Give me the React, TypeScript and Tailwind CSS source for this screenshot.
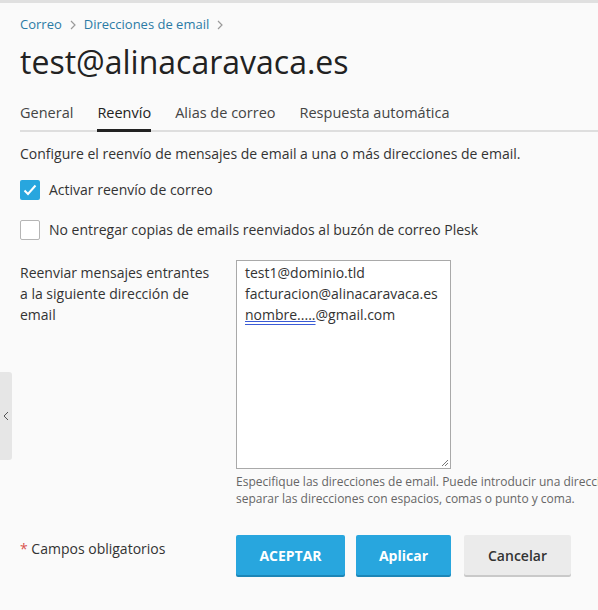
import { useState } from "react";

const tabs = ["General", "Reenvío", "Alias de correo", "Respuesta automática"];

function Chevron() {
  return (
    <svg width="8" height="10" viewBox="0 0 8 10" className="mx-[7px] inline-block">
      <path d="M2 1l4 4-4 4" fill="none" stroke="#9a9a9a" strokeWidth="1.2" />
    </svg>
  );
}

function Checkbox({ checked }: { checked: boolean }) {
  return checked ? (
    <span className="grid h-5 w-5 shrink-0 place-items-center rounded-[2px] bg-[#28a6de]">
      <svg width="14" height="12" viewBox="0 0 14 12">
        <path d="M1.5 6.5l3.5 3.5 7.5-8.5" fill="none" stroke="#fff" strokeWidth="2" />
      </svg>
    </span>
  ) : (
    <span className="h-5 w-5 shrink-0 rounded-[2px] border border-[#b5b5b5] bg-white" />
  );
}

export default function App() {
  const [active] = useState(1);

  return (
    <div
      className="relative h-[610px] w-[598px] overflow-hidden bg-[#fafafa] text-[#333]"
      style={{ fontFamily: '"Open Sans", "Liberation Sans", sans-serif' }}
    >
      <div className="h-[3px] bg-[#e0e0e0]" />

      <div className="absolute left-0 top-[372px] grid h-[88px] w-3 place-items-center rounded-r-[3px] bg-[#e6e6e6]">
        <svg width="6" height="10" viewBox="0 0 6 10">
          <path d="M5 1L1 5l4 4" fill="none" stroke="#555" strokeWidth="1" />
        </svg>
      </div>

      <div className="pl-5">
        <nav className="mt-[12px] flex items-center text-[13px] text-[#2b7aa5]">
          <span>Correo</span>
          <Chevron />
          <span>Direcciones de email</span>
          <Chevron />
        </nav>

        <h1 className="mt-[7px] text-[32px] leading-[40px] text-[#222]">test@alinacaravaca.es</h1>

        <div className="mt-[20px] flex border-b-2 border-[#dedede] text-[14.5px]">
          {tabs.map((t, i) => (
            <div
              key={t}
              className={
                i === active
                  ? "-mb-[2px] mr-[24px] border-b-[3px] border-[#222] pb-[4px] text-[#222]"
                  : "mr-[24px] pb-[7px] text-[#444]"
              }
            >
              {t}
            </div>
          ))}
        </div>

        <p className="mt-[12px] text-[14px] leading-5">
          Configure el reenvío de mensajes de email a una o más direcciones de email.
        </p>

        <label className="mt-[15px] flex items-center gap-[9px] text-[14px]">
          <Checkbox checked />
          Activar reenvío de correo
        </label>

        <label className="mt-[19px] flex items-center gap-[9px] text-[14px]">
          <Checkbox checked={false} />
          No entregar copias de emails reenviados al buzón de correo Plesk
        </label>

        <div className="mt-5 flex">
          <div className="w-[216px] shrink-0 pr-4 pt-[2px] text-[14px] leading-[21px]">
            Reenviar mensajes entrantes a la siguiente dirección de email
          </div>
          <div className="w-[460px] shrink-0">
            <div className="relative h-[209px] w-[215px] border border-[#a9a9a9] bg-white px-2 py-[1px] text-[14px] leading-[21px] text-[#333]">
              <div>test1@dominio.tld</div>
              <div>facturacion@alinacaravaca.es</div>
              <div>
                <span className="underline decoration-[#3b5bd6] decoration-double">nombre.....</span>@gmail.com
              </div>
              <svg width="9" height="9" viewBox="0 0 9 9" className="absolute bottom-[1px] right-[1px]">
                <path d="M8 2L2 8M8 5L5 8" stroke="#777" strokeWidth="1" />
              </svg>
            </div>
            <p className="mt-[4px] text-[12px] leading-[17px] text-[#666]">
              Especifique las direcciones de email. Puede introducir una dirección por línea o
              <br />
              separar las direcciones con espacios, comas o punto y coma.
            </p>
          </div>
        </div>

        <div className="mt-[28px] flex items-start">
          <div className="w-[216px] shrink-0 pt-[4px] text-[14px] leading-5">
            <span className="text-[#d9534f]">*</span> Campos obligatorios
          </div>
          <div className="flex gap-[11px]">
            <button className="h-10 w-[109px] rounded-[2px] bg-[#28a6de] text-[14px] font-bold text-white shadow-[0_2px_0_#1c86b7]">
              ACEPTAR
            </button>
            <button className="h-10 w-[95px] rounded-[2px] bg-[#28a6de] text-[14px] font-bold text-white shadow-[0_2px_0_#1c86b7]">
              Aplicar
            </button>
            <button className="ml-[2px] h-10 w-[107px] rounded-[2px] bg-[#ebebeb] text-[14px] font-semibold text-[#333] shadow-[0_2px_0_#c9c9c9]">
              Cancelar
            </button>
          </div>
        </div>
      </div>
    </div>
  );
}
